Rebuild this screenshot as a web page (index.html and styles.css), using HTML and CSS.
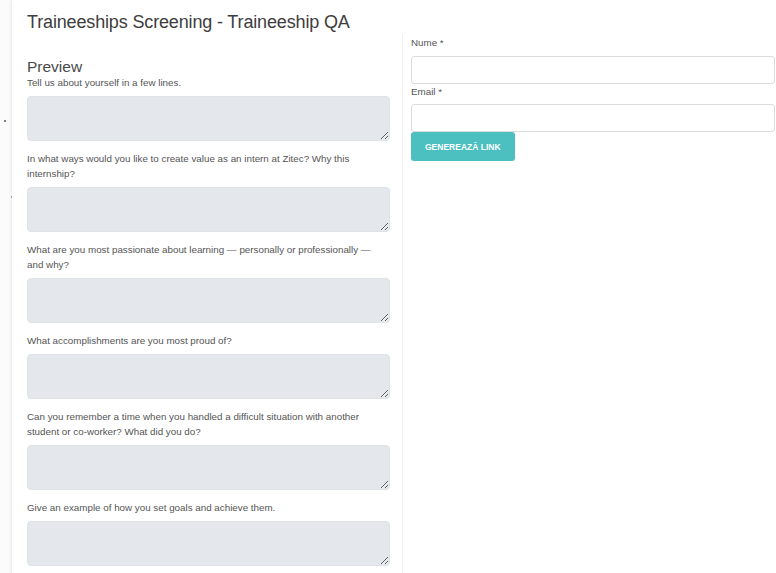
FILE: index.html
```html
<!DOCTYPE html>
<html lang="ro">
<head>
<meta charset="utf-8">
<title>Traineeships Screening - Traineeship QA</title>
<link rel="stylesheet" href="styles.css">
</head>
<body>
<div class="page">
  <div class="gutter"><span class="dot"></span><span class="tick"></span></div>
  <div class="sheet">
    <h1 class="title">Traineeships Screening - Traineeship QA</h1>
    <div class="columns">
      <section class="preview">
        <h2 class="preview-title">Preview</h2>
        <div class="question">
          <label class="q-label">Tell us about yourself in a few lines.</label>
          <textarea class="q-area"></textarea>
        </div>
        <div class="question">
          <label class="q-label">In what ways would you like to create value as an intern at Zitec? Why this internship?</label>
          <textarea class="q-area"></textarea>
        </div>
        <div class="question">
          <label class="q-label">What are you most passionate about learning — personally or professionally — and why?</label>
          <textarea class="q-area"></textarea>
        </div>
        <div class="question">
          <label class="q-label">What accomplishments are you most proud of?</label>
          <textarea class="q-area"></textarea>
        </div>
        <div class="question">
          <label class="q-label">Can you remember a time when you handled a difficult situation with another student or co-worker? What did you do?</label>
          <textarea class="q-area"></textarea>
        </div>
        <div class="question">
          <label class="q-label">Give an example of how you set goals and achieve them.</label>
          <textarea class="q-area"></textarea>
        </div>
      </section>
      <section class="generator">
        <label class="f-label">Nume *</label>
        <input class="f-input" type="text">
        <label class="f-label f-label-second">Email *</label>
        <input class="f-input" type="text">
        <button class="btn-generate" type="button">Generează link</button>
      </section>
    </div>
  </div>
</div>
</body>
</html>
```

FILE: styles.css
```css
html, body {
  margin: 0;
  padding: 0;
  background: #ffffff;
}

body {
  font-family: "Liberation Sans", Arial, sans-serif;
  color: #555555;
  height: 573px;
  overflow: hidden;
}

.page {
  display: flex;
  min-height: 573px;
}

.gutter {
  width: 12px;
  flex: 0 0 12px;
  background: #fbfbfb;
  display: flex;
  flex-direction: column;
  align-items: flex-start;
}

.dot {
  width: 2px;
  height: 2px;
  border-radius: 50%;
  background: #555;
  margin-top: 120px;
  margin-left: 4px;
}

.tick {
  width: 1px;
  height: 2px;
  background: #aaa;
  margin-top: 74px;
  margin-left: 11px;
}

.sheet {
  flex: 1;
  background: #ffffff;
  box-shadow: -1px 0 3px rgba(0, 0, 0, 0.08);
  min-height: 573px;
}

.title {
  margin: 0;
  padding: 10px 0 0 15px;
  font-size: 18px;
  letter-spacing: -0.15px;
  line-height: 24px;
  font-weight: normal;
  color: #3d3d3d;
}

.columns {
  display: flex;
  margin-top: 0;
}

.preview {
  width: 363px;
  flex: 0 0 363px;
  padding: 24px 12px 0 15px;
}

.preview-title {
  margin: 0;
  font-size: 15.5px;
  line-height: 17px;
  font-weight: normal;
  color: #4a4a4a;
}

.question {
  display: flex;
  flex-direction: column;
  margin-bottom: 10px;
}

.q-label {
  display: block;
  font-size: 9.8px;
  line-height: 15px;
  color: #555555;
  margin-bottom: 6px;
  padding-right: 4px;
}

.q-area {
  display: block;
  box-sizing: border-box;
  width: 363px;
  height: 45px;
  margin: 0;
  background: #e4e7eb;
  border: 1px solid #dfe2e6;
  border-radius: 4px;
  resize: vertical;
  font-family: inherit;
}

.generator {
  flex: 1;
  border-left: 1px solid #f1f1f1;
  padding: 1px 1px 0 8px;
  display: flex;
  flex-direction: column;
  align-items: flex-start;
}

.f-label {
  display: block;
  font-size: 9.8px;
  line-height: 15px;
  color: #555555;
  margin-bottom: 6px;
}

.f-label-second {
  margin-bottom: 5px;
}

.f-input {
  box-sizing: border-box;
  width: 100%;
  height: 28px;
  margin: 0;
  border: 1px solid #dcdcdc;
  border-radius: 3px;
  background: #ffffff;
  font-family: inherit;
}

.btn-generate {
  margin: 0;
  height: 29px;
  padding: 0 14px;
  border: none;
  border-radius: 3px;
  background: #4cbfc0;
  color: #ffffff;
  font-family: "Liberation Sans", Arial, sans-serif;
  font-weight: bold;
  font-size: 8.5px;
  text-transform: uppercase;
  letter-spacing: 0;
}
```
